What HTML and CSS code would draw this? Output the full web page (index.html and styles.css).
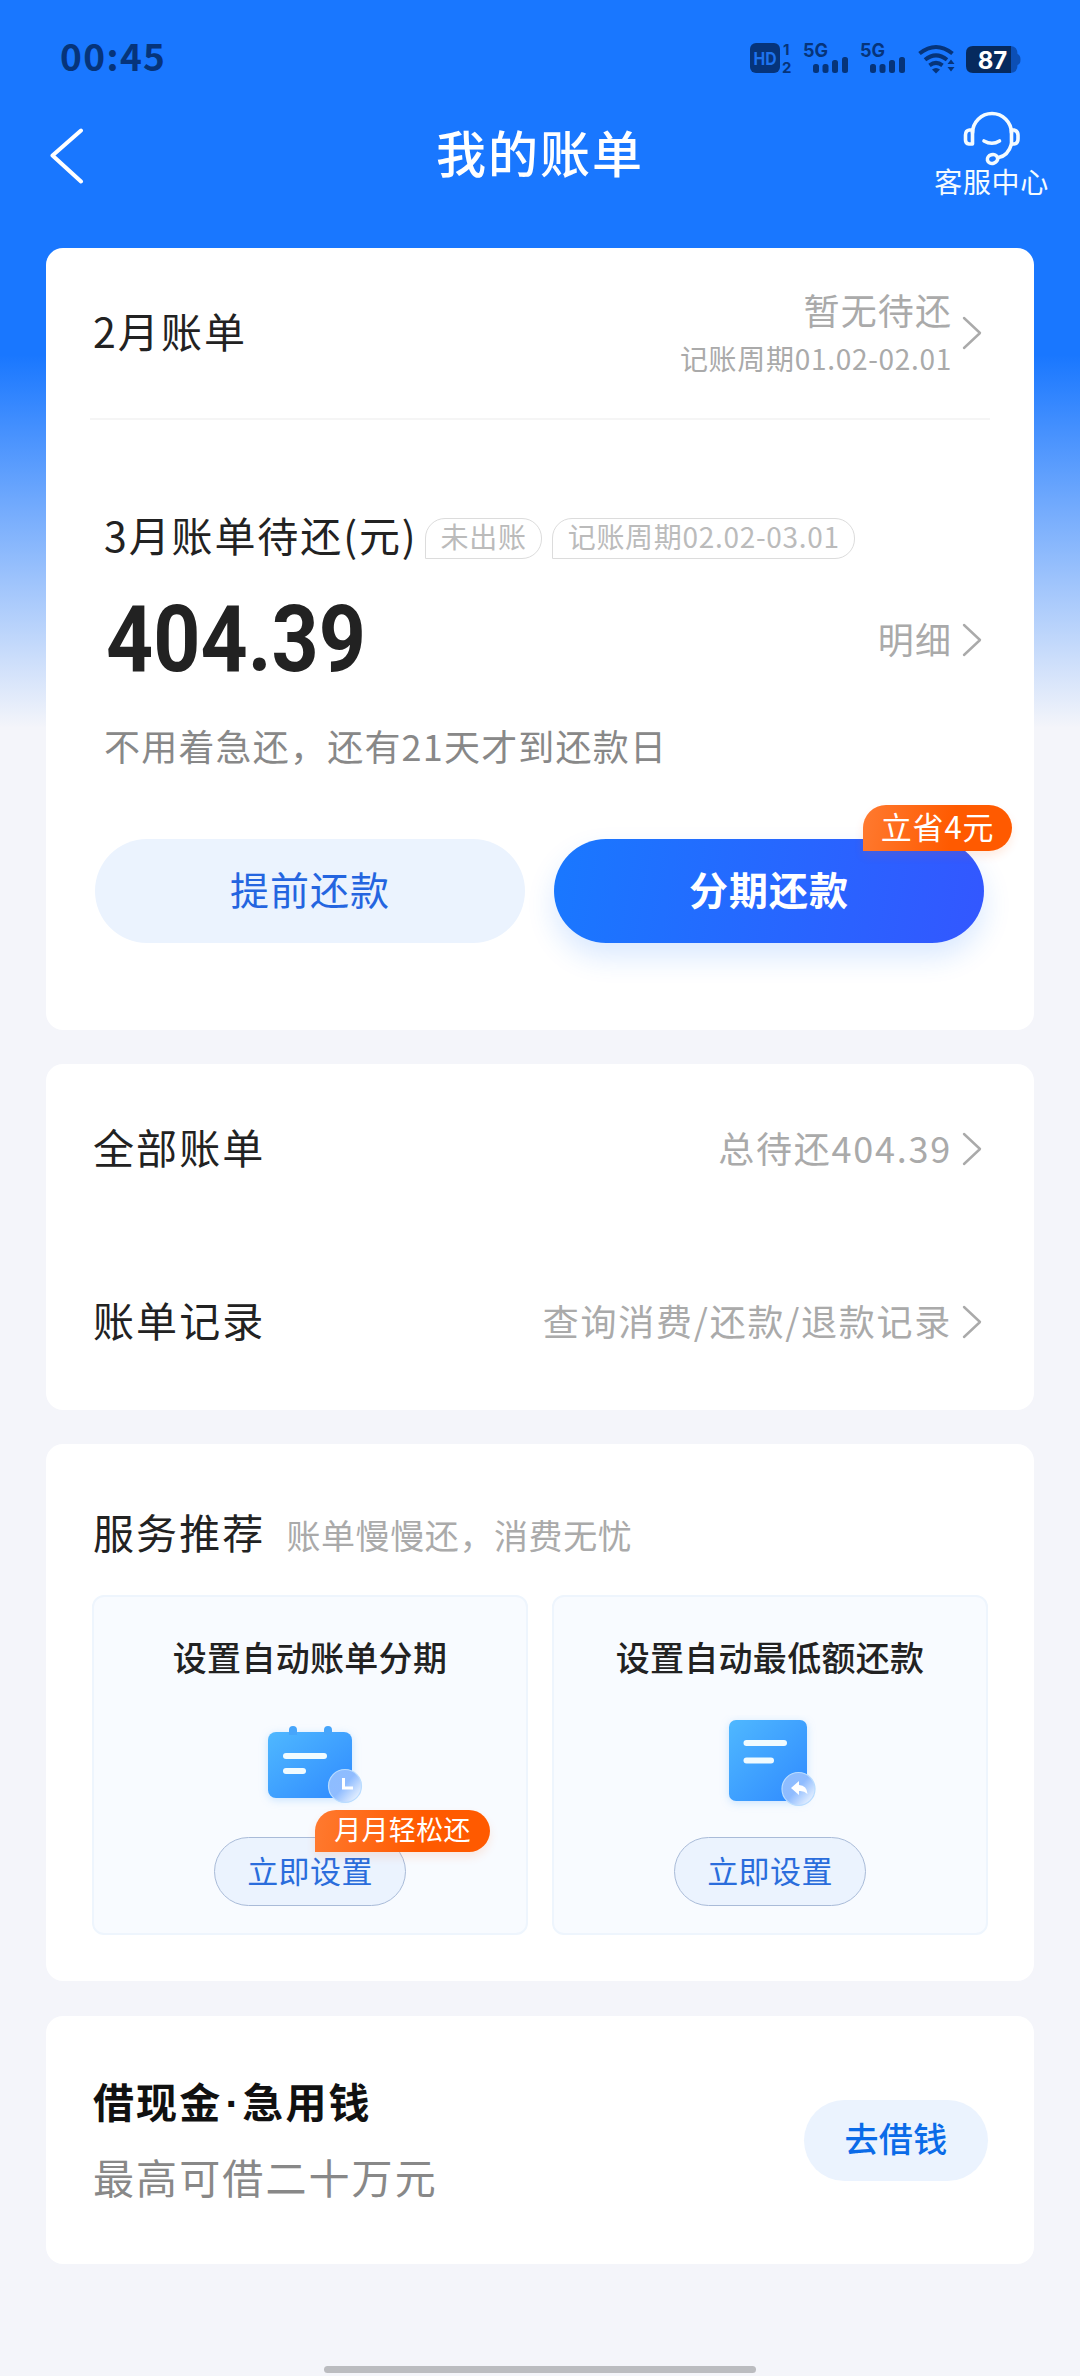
FILE: index.html
```html
<!DOCTYPE html>
<html lang="zh-CN">
<head>
<meta charset="utf-8">
<title>我的账单</title>
<link rel="stylesheet" href="styles.css">
</head>
<body>
<svg class="defs" width="0" height="0" aria-hidden="true">
  <defs>
    <symbol id="chevron" viewBox="0 0 20 34"><path d="M2 2 L18 17 L2 32" fill="none" stroke="#aaa" stroke-width="2.4" stroke-linecap="round" stroke-linejoin="round"/></symbol>
    <linearGradient id="sheet" x1="0" y1="0" x2="1" y2="1"><stop offset="0" stop-color="#4fb8ff"/><stop offset="1" stop-color="#2f8aff"/></linearGradient>
    <linearGradient id="bubble" x1="0.1" y1="0" x2="1" y2="0.8"><stop offset="0" stop-color="#8dbdff"/><stop offset="0.5" stop-color="#8fbcff"/><stop offset="1" stop-color="#eef5ff"/></linearGradient>
  </defs>
</svg>
<div class="page">
  <header class="top">
    <div class="status">
      <span class="time">00:45</span>
      <svg class="status-icons" width="276" height="44" viewBox="750 36 276 44">
        <g fill="#06347a">
          <rect x="750" y="43" width="30" height="30" rx="6"/>
          <text class="glyph" x="783" y="55" font-size="15">1</text>
          <text class="glyph" x="782" y="72.500" font-size="15">2</text>
          <text class="glyph" x="803" y="57" font-size="18.500" textLength="25" lengthAdjust="spacingAndGlyphs">5G</text>
          <rect x="813" y="64" width="6" height="9" rx="2.5"/><rect x="822.5" y="64" width="6" height="9" rx="2.5"/><rect x="832" y="60" width="6" height="13" rx="2.5"/><rect x="842" y="57" width="6" height="16" rx="2.5"/>
          <text class="glyph" x="860" y="57" font-size="18.500" textLength="25" lengthAdjust="spacingAndGlyphs">5G</text>
          <rect x="870" y="64" width="6" height="9" rx="2.5"/><rect x="879.5" y="64" width="6" height="9" rx="2.5"/><rect x="889" y="60" width="6" height="13" rx="2.5"/><rect x="899" y="57" width="6" height="16" rx="2.5"/>
          <path d="M932 69.5 Q936 66.5 940 69.5 L936 73.5 Z"/>
          <path d="M947.500 64 l3.500 -4.500 3.500 4.500z M947.500 67 l3.500 4.500 3.500 -4.500z"/>
        </g>
        <text class="glyph" x="753.500" y="65" font-size="18" fill="#1e73ee" textLength="23" lengthAdjust="spacingAndGlyphs">HD</text>
        <g fill="none" stroke="#06347a" stroke-width="4">
          <path d="M919.500 53.500 Q936 40.500 952.500 53.500"/>
          <path d="M925 59.700 Q936 51 947 59.700"/>
          <path d="M929.500 65.300 Q936 60.500 942.500 65.300"/>
        </g>
        <path d="M973 46 H1011 V73 H973 Q966 73 966 66 V53 Q966 46 973 46Z" fill="#062a5e"/>
        <path d="M1011 46 Q1017.500 46.500 1017.500 54 Q1020.500 55 1020.500 59.500 Q1020.500 64 1017.500 65 Q1017.500 72.500 1011 73Z" fill="#0c4fb5"/>
        <text class="glyph" x="992.500" y="69" font-size="24" fill="#fff" text-anchor="middle">87</text>
      </svg>
    </div>
    <nav class="nav">
      <svg class="back" width="34" height="56" viewBox="50 128 34 56"><path d="M81 130.500 L52.500 155.500 L81 181.500" fill="none" stroke="#fff" stroke-width="4" stroke-linecap="round" stroke-linejoin="round"/></svg>
      <h1 class="title">我的账单</h1>
      <div class="service">
        <svg width="60" height="56" viewBox="961 110 60 56" fill="none" stroke="#f4fbff" stroke-width="3.6" stroke-linecap="round" stroke-linejoin="round">
          <path d="M971.500 133 A19.500 19.500 0 0 1 1010.500 133"/>
          <path d="M971.500 130 H968.500 Q964.500 130.500 964.500 135 V140 Q964.500 143.500 968 144 H971.500Z"/>
          <path d="M1010.500 130 H1013 Q1017 131 1017 135 V139 Q1017 143.500 1013 144 H1010.500Z"/>
          <path d="M1010.500 144 Q1007 156 997.500 157.500"/>
          <ellipse cx="991.500" cy="159" rx="5.200" ry="4.300" transform="rotate(-15 991.500 159)"/>
          <path d="M983 141 Q991 145.500 998.500 141"/>
        </svg>
        <span>客服中心</span>
      </div>
    </nav>
  </header>
  <main class="cards">
    <section class="card bill">
      <div class="row row-last">
        <span class="label">2月账单</span>
        <div class="link">
          <div class="stack"><span class="value">暂无待还</span><span class="period">记账周期01.02-02.01</span></div>
          <svg class="chevron"><use href="#chevron"/></svg>
        </div>
      </div>
      <div class="due">
        <div class="due-head">
          <span class="label">3月账单待还(元)</span>
          <span class="tag">未出账</span>
          <span class="tag">记账周期02.02-03.01</span>
        </div>
        <div class="due-amount">
          <span class="amount">404.39</span>
          <div class="link"><span class="value">明细</span><svg class="chevron"><use href="#chevron"/></svg></div>
        </div>
        <p class="note">不用着急还，还有21天才到还款日</p>
      </div>
      <div class="actions">
        <div class="btn btn-light">提前还款</div>
        <div class="btn btn-main">分期还款<span class="badge badge-save">立省4元</span></div>
      </div>
    </section>
    <section class="card list">
      <div class="row"><span class="label">全部账单</span><div class="link"><span class="value">总待还404.39</span><svg class="chevron"><use href="#chevron"/></svg></div></div>
      <div class="row"><span class="label">账单记录</span><div class="link"><span class="value">查询消费/还款/退款记录</span><svg class="chevron"><use href="#chevron"/></svg></div></div>
    </section>
    <section class="card services">
      <div class="services-head"><span class="label">服务推荐</span><span class="hint">账单慢慢还，消费无忧</span></div>
      <div class="tiles">
        <div class="tile">
          <h2 class="tile-title">设置自动账单分期</h2>
          <svg class="tile-icon" width="110" height="100" viewBox="0 0 110 100">
            <rect class="glow" x="13" y="17" width="84" height="66" rx="8" fill="url(#sheet)"/>
            <path d="M34 20 V15 A4 4 0 0 1 42 15 V20Z M69 20 V15 A4 4 0 0 1 77 15 V20Z" fill="#46a5fb"/>
            <rect x="28" y="38" width="44" height="6" rx="3" fill="#f0fbff"/><rect x="28" y="53" width="23" height="6" rx="3" fill="#f0fbff"/>
            <circle cx="90" cy="71" r="16.500" fill="url(#bubble)" stroke="#b9dcff" stroke-width="1.200"/>
            <path d="M88.500 63 V73 H98" fill="none" stroke="#fff" stroke-width="3"/>
          </svg>
          <div class="pill">立即设置<span class="badge badge-easy">月月轻松还</span></div>
        </div>
        <div class="tile">
          <h2 class="tile-title">设置自动最低额还款</h2>
          <svg class="tile-icon" width="110" height="100" viewBox="0 0 110 100">
            <rect class="glow" x="14" y="5" width="78" height="81" rx="7" fill="url(#sheet)"/>
            <rect x="28.500" y="25" width="43.500" height="6" rx="3" fill="#f0fbff"/><rect x="28.500" y="42.500" width="30.500" height="6" rx="3" fill="#f0fbff"/>
            <circle cx="83.500" cy="74" r="16.500" fill="url(#bubble)" stroke="#b9dcff" stroke-width="1.200"/>
            <path d="M76 73 L84 66 V70 Q92 70.500 92.500 79 Q89 75.500 84 76 V80Z" fill="#fff"/>
          </svg>
          <div class="pill">立即设置</div>
        </div>
      </div>
    </section>
    <section class="card loan">
      <div class="loan-text"><strong>借现金<span class="dot">·</span>急用钱</strong><span class="loan-sub">最高可借二十万元</span></div>
      <div class="loan-btn">去借钱</div>
    </section>
  </main>
  <div class="home-bar"></div>
</div>
</body>
</html>
```
FILE: styles.css
```css
* { box-sizing: border-box; margin: 0; padding: 0; }
body {
  font-family: "Noto Sans CJK SC", "Noto Sans", sans-serif;
  color: #222;
  background: #f4f5fa;
  white-space: nowrap;
}
svg { display: block; flex: none; }
.defs { position: absolute; }
.page {
  width: 1080px;
  height: 2376px;
  display: flex;
  flex-direction: column;
  overflow: hidden;
  background: linear-gradient(#1977ff 0, #1977ff 355px, #f4f5fa 728px);
}
.status { height: 106px; display: flex; justify-content: space-between; align-items: flex-start; padding: 0 54px 0 60px; }
.time { margin-top: 35px; font-size: 37px; line-height: 40px; letter-spacing: 1.4px; font-weight: 700; color: #06347a; }
.status-icons { margin-top: 36px; overflow: visible; }
.glyph { font-family: Inter, Roboto, sans-serif; font-weight: 700; }
.nav { height: 142px; display: grid; grid-template-columns: 1fr auto 1fr; align-items: start; color: #fff; }
.back { margin: 22px 0 0 50px; }
.title { margin-top: 10px; font-size: 50px; line-height: 70px; font-weight: 500; letter-spacing: 2px; }
.service { justify-self: end; padding: 4px 31px 0 0; display: flex; flex-direction: column; align-items: center; font-size: 28px; line-height: 31px; letter-spacing: .7px; color: #f4fbff; }

.cards { display: flex; flex-direction: column; gap: 34px; padding: 0 46px; }
.card { background: #fff; border-radius: 17px; padding: 0 44px; }
.label { font-size: 41px; line-height: 60px; letter-spacing: 2.1px; }
.row { height: 173px; display: flex; justify-content: space-between; align-items: center; padding: 0 8px 0 3px; }
.list .row { padding-bottom: 3px; }
.list .value { letter-spacing: 1.75px; }
.row .label { margin-top: -6px; }
.row-last { height: 172px; border-bottom: 2px solid #f5f5f5; }
.link { display: flex; align-items: center; gap: 10px; color: #aaa; }
.chevron { width: 20px; height: 34px; }
.value { font-size: 36px; line-height: 50px; letter-spacing: 1.1px; margin-top: -4px; }
.stack { display: flex; flex-direction: column; align-items: flex-end; }
.stack .value { margin-top: 0; }
.period { font-size: 28px; line-height: 49px; letter-spacing: .7px; }

.bill { height: 782px; }
.due { padding: 88px 8px 0 14px; }
.due-head { height: 60px; display: flex; align-items: center; }
.due-head .label { margin-top: -8px; margin-right: 7px; letter-spacing: 1.9px; }
.tag { height: 41px; margin-right: 10px; padding: 0 14px 0 15px; border: 1.5px solid #dcdcdc; border-radius: 20px 20px 20px 0; font-size: 28px; line-height: 34px; letter-spacing: .7px; color: #bbb; }
.due-amount { height: 143px; display: flex; justify-content: space-between; align-items: center; }
.amount { margin-left: 2px; font-family: Roboto, sans-serif; font-size: 93px; font-weight: 700; line-height: 100px; letter-spacing: 0; transform: scaleX(.885); transform-origin: left; }
.note { font-size: 36px; line-height: 68px; letter-spacing: 1.2px; color: #888; }
.actions { display: grid; grid-template-columns: 430px 430px; gap: 29px; margin-top: 60px; padding-left: 5px; }
.btn { position: relative; height: 104px; border-radius: 52px; font-size: 39px; line-height: 99px; letter-spacing: 1px; text-align: center; }
.btn-light { background: #ebf3fe; color: #2465e0; }
.btn-main { color: #fff; font-weight: 700; background: linear-gradient(100deg, #1978ff, #3357ff); box-shadow: 0 14px 28px rgba(25, 120, 255, .16); }
.badge { position: absolute; background: linear-gradient(100deg, #ff7a30, #ff5a00 60%); color: #fff; text-align: center; font-weight: 400; box-shadow: 0 5px 10px rgba(255, 90, 0, .12); }
.badge-save { left: 309px; top: -34px; width: 149px; height: 46px; border-radius: 23px 23px 23px 0; font-size: 31px; line-height: 42px; letter-spacing: .8px; }

.services { height: 537px; padding-top: 50px; }
.services-head { height: 74px; display: flex; align-items: center; padding-left: 3px; }
.hint { margin: 6px 0 0 21px; font-size: 34px; letter-spacing: .6px; color: #aaa; }
.tiles { display: grid; grid-template-columns: 436px 436px; gap: 24px; margin: 27px 0 0 2px; }
.tile { height: 340px; display: flex; flex-direction: column; align-items: center; padding-top: 35px; border: 2px solid #eef5fd; border-radius: 12px; background: #f8fbff; }
.tile-title { font-size: 34px; line-height: 50px; letter-spacing: .3px; font-weight: 500; }
.tile-icon { margin: 33px 0 22px; }
.glow { filter: drop-shadow(0 2px 4px rgba(60, 160, 255, .25)); }
.pill { position: relative; width: 192px; height: 69px; border: 1px solid #a9bbd8; border-radius: 35px; background: #ebf3fe; font-size: 31px; line-height: 64px; letter-spacing: .4px; text-align: center; color: #2a6ddc; }
.badge-easy { left: 100px; top: -28px; width: 175px; height: 42px; border-radius: 21px 21px 21px 0; font-size: 27px; line-height: 37px; letter-spacing: .3px; }

.loan { height: 248px; margin-top: 1px; display: flex; justify-content: space-between; align-items: center; padding: 0 46px 0 47px; }
.loan-text { display: flex; flex-direction: column; padding-bottom: 4px; font-size: 41px; line-height: 76px; letter-spacing: 2.1px; }
.loan-text strong { font-weight: 700; color: #111; }
.loan-text .loan-sub { color: #888; }
.dot { display: inline-block; width: 20px; font-family: "Liberation Sans", sans-serif; line-height: 1; text-align: center; letter-spacing: 0; }
.loan-btn { width: 184px; height: 81px; border-radius: 41px; background: #ebf3fe; color: #0a6be8; font-size: 34px; line-height: 76px; letter-spacing: .4px; font-weight: 500; text-align: center; }
.home-bar { width: 432px; height: 7px; margin: auto auto 3px; border-radius: 4px; background: #bbbcc0; }
```
